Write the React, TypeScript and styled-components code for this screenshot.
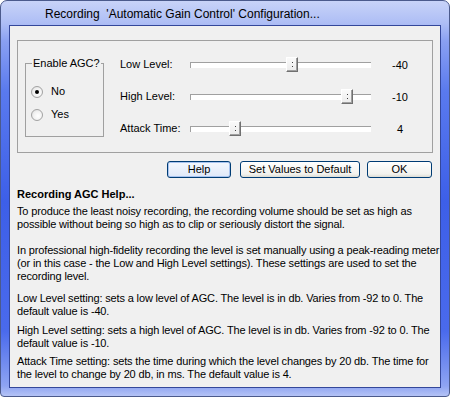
import React from 'react';
import styled, { createGlobalStyle } from 'styled-components';

const GlobalStyle = createGlobalStyle`
  html, body {
    margin: 0;
    padding: 0;
    background: #ffffff;
  }
  body {
    font-family: 'Liberation Sans', Arial, sans-serif;
    font-size: 11px;
    color: #000;
  }
`;

type SliderSpec = {
  label: string;
  value: number;
  min: number;
  max: number;
};

const sliders: SliderSpec[] = [
  { label: 'Low Level:', value: -40, min: -92, max: 0 },
  { label: 'High Level:', value: -10, min: -92, max: 0 },
  { label: 'Attack Time:', value: 4, min: 1, max: 14 },
];

const TRACK_WIDTH = 181;
const THUMB_WIDTH = 12;

const App = () => {
  return (
    <>
      <GlobalStyle />
      <Window>
        <TitleBar>
          <TitleText>Recording  'Automatic Gain Control' Configuration...</TitleText>
        </TitleBar>

        <Client>
          {/* 상단: AGC 설정 패널 */}
          <SettingsPanel>
            <GroupBox>
              <Legend>Enable AGC?</Legend>
              <RadioList>
                <RadioRow>
                  <RadioDot $checked />
                  <span>No</span>
                </RadioRow>
                <RadioRow>
                  <RadioDot />
                  <span>Yes</span>
                </RadioRow>
              </RadioList>
            </GroupBox>

            <SliderGrid>
              {sliders.map((s) => {
                const pos = ((s.value - s.min) / (s.max - s.min)) * (TRACK_WIDTH - THUMB_WIDTH);
                return (
                  <React.Fragment key={s.label}>
                    <SliderLabel>{s.label}</SliderLabel>
                    <TrackWrap>
                      <Track />
                      <Thumb style={{ left: Math.round(pos) }}>
                        <Grip />
                      </Thumb>
                    </TrackWrap>
                    <ValueText>{s.value}</ValueText>
                  </React.Fragment>
                );
              })}
            </SliderGrid>
          </SettingsPanel>

          <ButtonRow>
            <DialogButton $width={64} $default>Help</DialogButton>
            <DialogButton $width={120}>Set Values to Default</DialogButton>
            <DialogButton $width={65} style={{ marginLeft: -2 }}>OK</DialogButton>
          </ButtonRow>

          {/* 하단: 도움말 */}
          <HelpSection>
            <HelpTitle>Recording AGC Help...</HelpTitle>
            <HelpText $gap={4}>
              To produce the least noisy recording, the recording volume should be set as high as<br />
              possible without being so high as to clip or seriously distort the signal.
            </HelpText>
            <HelpText $gap={13}>
              In professional high-fidelity recording the level is set manually using a peak-reading meter<br />
              (or in this case - the Low and High Level settings). These settings are used to set the<br />
              recording level.
            </HelpText>
            <HelpText $gap={9}>
              Low Level setting: sets a low level of AGC. The level is in db. Varies from -92 to 0. The<br />
              default value is -40.
            </HelpText>
            <HelpText $gap={6}>
              High Level setting: sets a high level of AGC. The level is in db. Varies from -92 to 0. The<br />
              default value is -10.
            </HelpText>
            <HelpText $gap={5}>
              Attack Time setting: sets the time during which the level changes by 20 db. The time for<br />
              the level to change by 20 db, in ms. The default value is 4.
            </HelpText>
          </HelpSection>
        </Client>
      </Window>
    </>
  );
};

const Window = styled.div`
  box-sizing: border-box;
  width: 450px;
  height: 397px;
  display: flex;
  flex-direction: column;
  padding: 0 8px 8px 8px;
  border: 1px solid #4b5a8c;
  border-radius: 7px 7px 4px 4px;
  background: linear-gradient(
    180deg,
    #c8d3f8 0px,
    #aebef5 22px,
    #8aa0f2 40px,
    #5a7aee 90px,
    #3d5fe8 200px,
    #4a6aec 330px,
    #8ea4f2 385px,
    #b8c6f6 396px
  );
  overflow: hidden;
`;

const TitleBar = styled.div`
  height: 24px;
  display: flex;
  align-items: center;
  padding-left: 36px;
  flex-shrink: 0;
`;

const TitleText = styled.span`
  font-family: 'Liberation Sans', Arial, sans-serif;
  font-size: 12px;
  color: #000;
  white-space: pre;
  margin-top: 1px;
`;

const Client = styled.div`
  flex: 1;
  display: flex;
  flex-direction: column;
  background: #f0f0f0;
  border: 1px solid #34479a;
  padding: 14px 0 0 7px;
  box-sizing: border-box;
`;

const SettingsPanel = styled.div`
  box-sizing: border-box;
  width: 416px;
  height: 113px;
  border: 1px solid #a0a0a0;
  display: flex;
  align-items: flex-start;
`;

const GroupBox = styled.fieldset`
  box-sizing: border-box;
  width: 79px;
  height: 80px;
  margin: 16px 0 0 7px;
  padding: 0 0 0 5px;
  border: 1px solid #a0a0a0;
  min-inline-size: 0;
`;

const Legend = styled.legend`
  margin-left: 1px;
  padding: 0 1px;
  line-height: 13px;
  white-space: nowrap;
`;

const RadioList = styled.div`
  display: flex;
  flex-direction: column;
  gap: 10px;
  padding-top: 15px;
`;

const RadioRow = styled.div`
  display: flex;
  align-items: center;
  gap: 8px;
  height: 13px;
  line-height: 13px;
`;

const RadioDot = styled.span<{ $checked?: boolean }>`
  box-sizing: border-box;
  width: 12px;
  height: 12px;
  border-radius: 50%;
  border: 1px solid #a2a2a2;
  background: radial-gradient(circle at 60% 60%, #ffffff 0%, #f2f2f2 50%, #d8d8d8 100%);
  display: flex;
  align-items: center;
  justify-content: center;

  &::after {
    content: '';
    width: 4px;
    height: 4px;
    border-radius: 50%;
    background: ${(p) => (p.$checked ? '#000' : 'transparent')};
  }
`;

const SliderGrid = styled.div`
  display: grid;
  grid-template-columns: 70px ${TRACK_WIDTH}px 58px;
  grid-auto-rows: 32px;
  align-items: center;
  margin: 8px 0 0 16px;
`;

const SliderLabel = styled.span`
  padding-bottom: 3px;
  white-space: nowrap;
`;

const TrackWrap = styled.div`
  position: relative;
  height: 16px;
  display: flex;
  align-items: center;
`;

const Track = styled.div`
  box-sizing: border-box;
  width: 100%;
  height: 6px;
  background: #fff;
  border-top: 1px solid #a0a0a0;
  border-left: 1px solid #a0a0a0;
`;

const Thumb = styled.div`
  position: absolute;
  top: 0;
  box-sizing: border-box;
  width: ${THUMB_WIDTH}px;
  height: 15px;
  background: linear-gradient(180deg, #fafafa 0%, #ececec 100%);
  border: 1px solid;
  border-color: #ffffff #707070 #707070 #ffffff;
  box-shadow: inset -1px -1px 0 #a0a0a0;
  display: flex;
  align-items: center;
  justify-content: center;
`;

const Grip = styled.span`
  width: 1px;
  height: 6px;
  margin-top: 1px;
  background: linear-gradient(180deg, #404040 0 1px, transparent 1px 4px, #404040 4px 5px, transparent 5px);
`;

const ValueText = styled.span`
  text-align: center;
  padding-bottom: 1px;
`;

const ButtonRow = styled.div`
  display: flex;
  justify-content: flex-end;
  gap: 9px;
  margin-top: 8px;
  padding-right: 8px;
`;

const DialogButton = styled.button<{ $width: number; $default?: boolean }>`
  box-sizing: border-box;
  width: ${(p) => p.$width}px;
  height: 17px;
  padding: 0;
  font-family: 'Liberation Sans', Arial, sans-serif;
  font-size: 11px;
  color: #000;
  border: 1px solid #003c74;
  border-radius: 3px;
  background: ${(p) =>
    p.$default
      ? 'linear-gradient(180deg, #f4f8fe 0%, #dfe8f8 100%)'
      : 'linear-gradient(180deg, #ffffff 0%, #f2f2ee 80%, #dcdcd4 100%)'};
  box-shadow: ${(p) => (p.$default ? 'inset 0 0 0 1px #a8c4f0' : 'none')};
  line-height: 15px;
`;

const HelpSection = styled.div`
  display: flex;
  flex-direction: column;
  margin-top: 10px;
  line-height: 13px;
  letter-spacing: -0.15px;
`;

const HelpTitle = styled.div`
  font-weight: bold;
  letter-spacing: 0;
`;

const HelpText = styled.p<{ $gap: number }>`
  margin: ${(p) => p.$gap}px 0 0 0;
  white-space: nowrap;
`;

export default App;
